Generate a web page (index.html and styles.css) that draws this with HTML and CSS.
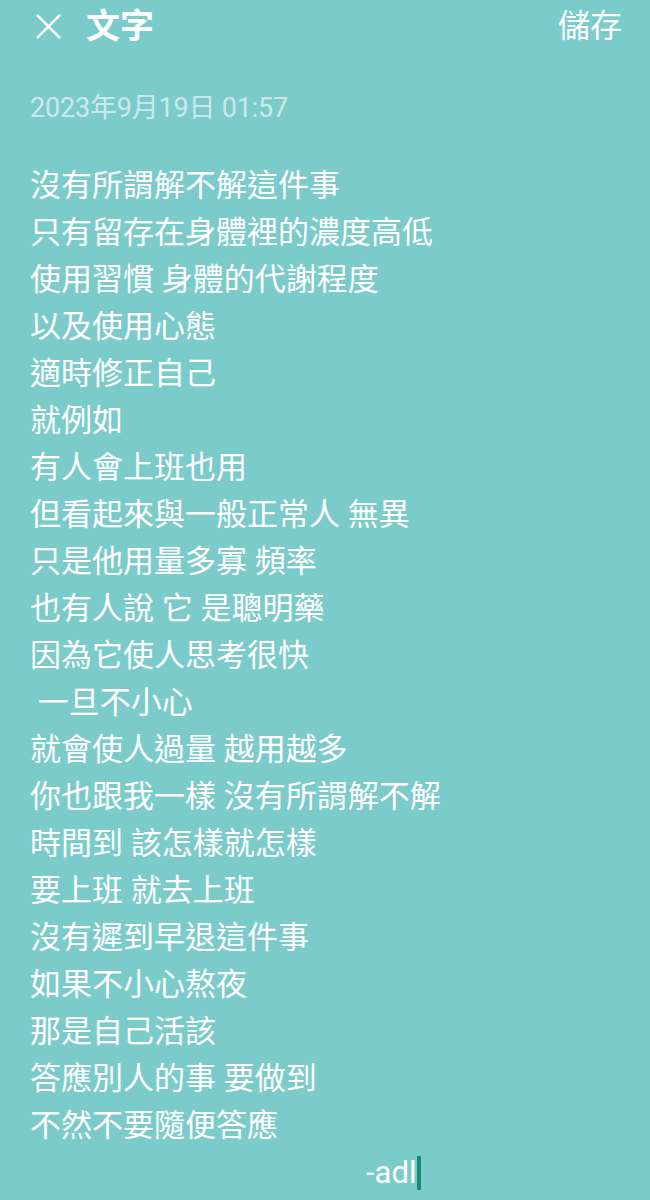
FILE: index.html
```html
<!DOCTYPE html>
<html lang="zh-Hant">
<head>
<meta charset="utf-8">
<link rel="stylesheet" href="styles.css">
</head>
<body>
<div class="page">
  <header class="bar">
    <div class="bar-left">
      <svg class="close" viewBox="0 0 28 28" width="28" height="28"><path d="M2 2L26 26M26 2L2 26" stroke="#fff" stroke-width="2.6" fill="none"/></svg>
      <span class="title">文字</span>
    </div>
    <span class="save">儲存</span>
  </header>
  <div class="date">2023年9月19日 01:57</div>
  <div class="body">
    <div class="line">沒有所謂解不解這件事</div>
    <div class="line">只有留存在身體裡的濃度高低</div>
    <div class="line">使用習慣 身體的代謝程度</div>
    <div class="line">以及使用心態</div>
    <div class="line">適時修正自己</div>
    <div class="line">就例如</div>
    <div class="line">有人會上班也用</div>
    <div class="line">但看起來與一般正常人 無異</div>
    <div class="line">只是他用量多寡 頻率</div>
    <div class="line">也有人說 它 是聰明藥</div>
    <div class="line">因為它使人思考很快</div>
    <div class="line"> 一旦不小心</div>
    <div class="line">就會使人過量 越用越多</div>
    <div class="line">你也跟我一樣 沒有所謂解不解</div>
    <div class="line">時間到 該怎樣就怎樣</div>
    <div class="line">要上班 就去上班</div>
    <div class="line">沒有遲到早退這件事</div>
    <div class="line">如果不小心熬夜</div>
    <div class="line">那是自己活該</div>
    <div class="line">答應別人的事 要做到</div>
    <div class="line">不然不要隨便答應</div>
    <div class="line sign">-adl<span class="cursor"></span></div>
  </div>
</div>
</body>
</html>
```
FILE: styles.css
```css
html, body {
  margin: 0;
  padding: 0;
  background: #7ccbcb;
}
.page {
  width: 650px;
  height: 1200px;
  overflow: hidden;
  background: #7ccbcb;
  color: #fff;
  font-family: Roboto, "Noto Sans CJK TC", sans-serif;
}
.bar {
  display: flex;
  justify-content: space-between;
  align-items: center;
  height: 52px;
  padding: 0 28px 0 35px;
}
.bar-left {
  display: flex;
  align-items: center;
  gap: 24px;
}
.close {
  display: block;
  width: 27px;
  height: 27px;
}
.title {
  font-size: 34px;
  font-weight: 700;
  line-height: 1;
}
.save {
  font-size: 32px;
  line-height: 1;
}
.date {
  margin: 40px 0 0 30px;
  font-size: 27px;
  line-height: 32px;
  letter-spacing: -0.2px;
  color: rgba(255, 255, 255, 0.62);
}
.body {
  margin-top: 38px;
  padding-left: 30px;
  font-size: 31px;
  line-height: 47px;
}
.line {
  white-space: pre;
  height: 47px;
}
.sign {
  padding-left: 336px;
  display: flex;
  align-items: center;
}
.cursor {
  display: inline-block;
  width: 4px;
  height: 34px;
  background: #1a8a78;
  margin-left: 1px;
}
```
